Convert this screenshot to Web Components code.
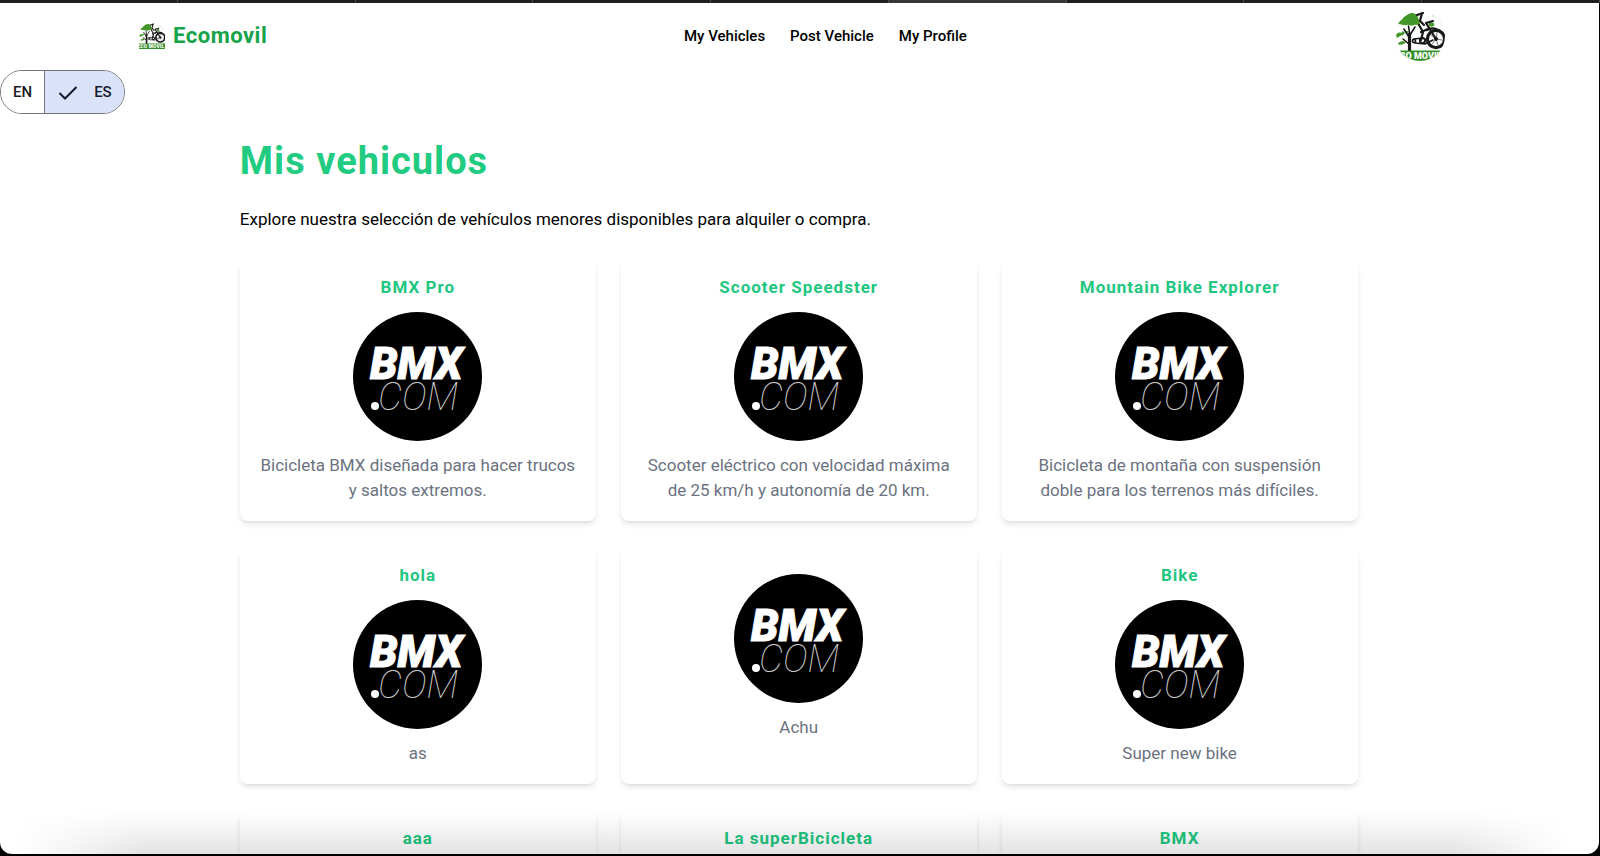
<!DOCTYPE html>
<html lang="es">
<head>
<meta charset="utf-8">
<meta name="viewport" content="width=device-width, initial-scale=1">
<title>Ecomovil</title>
<style>
  body { margin: 0; background: #000; color: #000; font-family: Roboto, "Liberation Sans", sans-serif; }
</style>
</head>
<body>
<eco-window>
  <eco-header></eco-header>
  <language-switch></language-switch>
  <vehicle-list></vehicle-list>
</eco-window>

<template id="eco-window">
  <style>
    :host { display: flex; flex-direction: column; height: 100vh; overflow: hidden; }
    .tabs { display: grid; grid-template-columns: repeat(9, 1fr); flex: none; height: 3px; background: #201f1f; }
    .tabs i { border-right: 1px solid #4a4848; }
    .tabs i.on { background: #3a3635; }
    .page { flex: 1; min-height: 0; overflow: hidden; position: relative; background: #fff;
      margin: 0 1px 2px 0; border-radius: 0 0 12px 12px; }
    .shade { position: absolute; left: 0; right: 0; bottom: 0; height: 42px; pointer-events: none;
      background: linear-gradient(to bottom, transparent, rgba(0,0,0,.11));
      -webkit-mask-image: linear-gradient(to right, transparent 1%, #000 9%, #000 91%, transparent 98%);
      mask-image: linear-gradient(to right, transparent 1%, #000 9%, #000 91%, transparent 98%); }
  </style>
  <div class="tabs"><i></i><i></i><i></i><i></i><i></i><i class="on"></i><i></i><i></i><i></i></div>
  <div class="page"><slot></slot><div class="shade"></div></div>
</template>

<template id="eco-logo">
  <style>
    :host { display: block; overflow: hidden; }
    svg { display: block; width: 100%; height: 100%; }
  </style>
  <svg viewBox="0 0 50 50" aria-hidden="true">
    <rect width="50" height="50" fill="#fff"/>
    <g fill="#43972a">
      <path d="M3 13c0-3 2-4 4-4 1-4 4-4 6-6 3-2 7-1 9 1l2 5 1 4c-2 2-4 0-6 1-3 2-5-1-7 0-3 1-5-1-9-1z"/>
      <path d="M1 24c1-2 3-3 5-2l2-2 2 2-2 2-3 1-3 2zM3 32l4-2 4 1-2 2-5 1z"/>
      <ellipse cx="36.500" cy="13.500" rx="2.800" ry="2"/><ellipse cx="12" cy="21" rx="1.500" ry="1"/>
    </g>
    <g fill="#b9d2ae">
      <circle cx="38" cy="5" r=".8"/><circle cx="41" cy="6" r=".8"/><circle cx="44" cy="8" r=".9"/>
      <circle cx="46" cy="11" r=".8"/><circle cx="47" cy="14" r=".7"/>
    </g>
    <g fill="none" stroke="#171916" stroke-linecap="round" stroke-linejoin="round">
      <path d="M14.500 40V23" stroke-width="3.200"/>
      <path d="M14.500 27L9 18M15 24l5-8M14.500 22l-1-7M14 33l-6-5" stroke-width="1.600"/>
      <circle cx="41" cy="28" r="8.600" stroke-width="3.200"/>
      <circle cx="41" cy="28" r="2" fill="#171916" stroke="none"/>
      <path d="M41 28l-5-4M41 28l1-6M41 28l6 1M41 28l-4 5M41 28l2 6" stroke-width=".6"/>
      <path d="M41 28L31 12M31 12l7-2M32 19c4-3 11-2 15 3" stroke-width="2.200"/>
      <path d="M22 4l6-2M27 2l-2 8 4 4M24 14l4 7-2 8M26 21l7-3" stroke-width="2.200"/>
      <circle cx="27.500" cy="29.500" r="2.600" stroke-width="2"/>
      <circle cx="19" cy="30" r="1.600" stroke-width="1.600"/>
      <path d="M19 28l9-1M20 32l10 1 8-4" stroke-width="1.400"/>
    </g>
    <path d="M0 39.500h50V50H0z" fill="#33912a"/>
    <text x="23" y="48" text-anchor="middle" font-size="9" font-weight="900" fill="#fff" font-family="Roboto, sans-serif">ECO MOVIL</text>
  </svg>
</template>

<template id="bmx-logo">
  <style>
    :host { display: block; }
    svg { display: block; width: 100%; height: 100%; }
  </style>
  <svg viewBox="0 0 129 129" role="img" aria-label="BMX.com">
    <circle cx="64.500" cy="64.500" r="64.500" fill="#000"/>
    <g fill="#fff" font-family="Roboto, sans-serif" font-style="italic">
      <text x="17" y="67" font-size="44" font-weight="900" stroke="#fff" stroke-width="1">BMX</text>
      <text x="25" y="98" font-size="38" font-weight="100" fill="#ccc">COM</text>
    </g>
    <circle cx="22" cy="94" r="4" fill="#fff"/>
  </svg>
</template>

<template id="eco-header">
  <style>
    :host { display: block; padding: 8px 9.600% 9px 8.700%; }
    header { display: flex; align-items: center; justify-content: space-between; }
    .brand { display: flex; align-items: center; gap: 8px; color: #16a34a; font-size: 22px; line-height: 28px; font-weight: 700; letter-spacing: .5px; text-decoration: none; }
    .brand eco-logo { width: 26px; height: 26px; }
    nav { display: flex; gap: 25px; margin-right: 12px; }
    nav a { color: #000; font-size: 15px; line-height: 20px; font-weight: 500; text-decoration: none; }
    .user { padding: 0; border: 0; background: none; }
    .user eco-logo { width: 50px; height: 50px; border-radius: 50%; }
  </style>
  <header>
    <a class="brand" href="#"><eco-logo></eco-logo>Ecomovil</a>
    <nav><a href="#vehicles">My Vehicles</a><a href="#post">Post Vehicle</a><a href="#profile">My Profile</a></nav>
    <button class="user" aria-label="User"><eco-logo></eco-logo></button>
  </header>
</template>

<template id="language-switch">
  <style>
    :host { display: flex; width: max-content; border: 1px solid #757680; border-radius: 22px; overflow: hidden; }
    button { display: flex; align-items: center; height: 42px; padding: 0 12px; border: 0; background: #fff; color: #1b1b1f; font: 500 15px/20px Roboto, sans-serif; }
    button + button { border-left: 1px solid #757680; }
    button[aria-pressed="true"] { gap: 15px; background: #dae2f9; color: #131c2b; }
    svg { width: 22px; height: 22px; }
  </style>
  <button aria-pressed="false">EN</button>
  <button aria-pressed="true"><svg viewBox="0 0 22 22" aria-hidden="true"><path d="M2.500 12l5.500 5.500L19.500 6" fill="none" stroke="currentColor" stroke-width="2"/></svg>ES</button>
</template>

<template id="vehicle-list">
  <style>
    :host { display: block; padding: 24px 15.100% 0 15%; }
    h1 { margin: 0; color: #21cb81; font-size: 38px; line-height: 46px; font-weight: 700; letter-spacing: 1px; }
    p { margin: 23px 0 28px; font-size: 17px; line-height: 24px; }
    .grid { display: grid; grid-template-columns: repeat(3, 1fr); gap: 26px 25px; }
    bmx-logo { width: 129px; height: 129px; }
  </style>
  <h1>Mis vehiculos</h1>
  <p>Explore nuestra selección de vehículos menores disponibles para alquiler o compra.</p>
  <div class="grid">
    <vehicle-card><span slot="name">BMX Pro</span><bmx-logo slot="photo"></bmx-logo>Bicicleta BMX diseñada para hacer trucos y saltos extremos.</vehicle-card>
    <vehicle-card><span slot="name">Scooter Speedster</span><bmx-logo slot="photo"></bmx-logo>Scooter eléctrico con velocidad máxima de 25 km/h y autonomía de 20 km.</vehicle-card>
    <vehicle-card><span slot="name">Mountain Bike Explorer</span><bmx-logo slot="photo"></bmx-logo>Bicicleta de montaña con suspensión doble para los terrenos más difíciles.</vehicle-card>
    <vehicle-card><span slot="name">hola</span><bmx-logo slot="photo"></bmx-logo>as</vehicle-card>
    <vehicle-card><bmx-logo slot="photo"></bmx-logo>Achu</vehicle-card>
    <vehicle-card><span slot="name">Bike</span><bmx-logo slot="photo"></bmx-logo>Super new bike</vehicle-card>
    <vehicle-card><span slot="name">aaa</span></vehicle-card>
    <vehicle-card><span slot="name">La superBicicleta</span></vehicle-card>
    <vehicle-card><span slot="name">BMX</span></vehicle-card>
  </div>
</template>

<template id="vehicle-card">
  <style>
    :host { display: block; padding: 15px 20px 18px; border-radius: 8px; background: #fff; text-align: center;
      box-shadow: 0 4px 6px -1px rgba(0,0,0,.1), 0 2px 4px -2px rgba(0,0,0,.1); }
    h2 { margin: 0; color: #21c67f; font-size: 17px; line-height: 26px; font-weight: 700; letter-spacing: 1px; }
    .photo { display: flex; justify-content: center; min-height: 129px; margin: 12px 0; }
    p { margin: 0; color: #6b7280; font-size: 17px; line-height: 25px; }
  </style>
  <h2><slot name="name"></slot></h2>
  <div class="photo"><slot name="photo"></slot></div>
  <p><slot></slot></p>
</template>

<script>
  for (const name of ["eco-logo", "bmx-logo", "eco-window", "eco-header", "language-switch", "vehicle-card", "vehicle-list"]) {
    customElements.define(name, class extends HTMLElement {
      constructor() {
        super();
        this.attachShadow({ mode: "open" }).append(document.getElementById(name).content.cloneNode(true));
      }
    });
  }
</script>
</body>
</html>
